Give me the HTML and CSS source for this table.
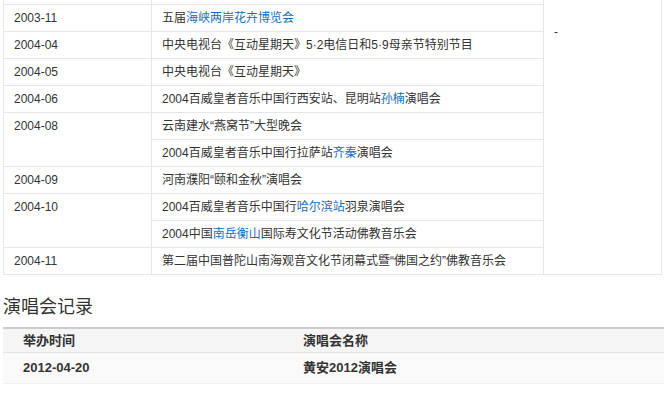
FILE: index.html
```html
<!DOCTYPE html>
<html lang="zh-CN">
<head>
<meta charset="utf-8">
<title>演出记录</title>
<link rel="stylesheet" href="styles.css">
</head>
<body>
<div class="page">
  <table class="events">
    <colgroup>
      <col class="c-date">
      <col class="c-name">
      <col class="c-note">
    </colgroup>
    <tr class="prev">
      <td></td>
      <td></td>
      <td class="note" rowspan="12">-</td>
    </tr>
    <tr><td>2003-11</td><td>五届<a href="#">海峡两岸花卉博览会</a></td></tr>
    <tr><td>2004-04</td><td>中央电视台《互动星期天》5·2电信日和5·9母亲节特别节目</td></tr>
    <tr><td>2004-05</td><td>中央电视台《互动星期天》</td></tr>
    <tr><td>2004-06</td><td>2004百威皇者音乐中国行西安站、昆明站<a href="#">孙楠</a>演唱会</td></tr>
    <tr><td rowspan="2" class="top">2004-08</td><td>云南建水“燕窝节”大型晚会</td></tr>
    <tr><td>2004百威皇者音乐中国行拉萨站<a href="#">齐秦</a>演唱会</td></tr>
    <tr><td>2004-09</td><td>河南濮阳“颐和金秋”演唱会</td></tr>
    <tr><td rowspan="2" class="top">2004-10</td><td>2004百威皇者音乐中国行<a href="#">哈尔滨站</a>羽泉演唱会</td></tr>
    <tr><td>2004中国<a href="#">南岳衡山</a>国际寿文化节活动佛教音乐会</td></tr>
    <tr><td>2004-11</td><td>第二届中国普陀山南海观音文化节闭幕式暨“佛国之约”佛教音乐会</td></tr>
  </table>

  <h2 class="title">演唱会记录</h2>

  <table class="concerts">
    <colgroup>
      <col class="k-date">
      <col class="k-name">
    </colgroup>
    <tr class="head"><th>举办时间</th><th>演唱会名称</th></tr>
    <tr class="row"><td>2012-04-20</td><td>黄安2012演唱会</td></tr>
  </table>
</div>
</body>
</html>
```
FILE: styles.css
```css
html, body {
  margin: 0;
  padding: 0;
  background: #fff;
}
body {
  font-family: "Liberation Sans", Arial, "Noto Sans CJK SC", sans-serif;
  color: #333;
  font-size: 12px;
}
.page {
  padding-left: 3px;
  overflow: hidden;
  height: 397px;
}
a {
  color: #136ec2;
  text-decoration: none;
}

.events {
  border-collapse: collapse;
  table-layout: fixed;
  width: 658px;
  margin-top: -23px;
}
.c-date { width: 148px; }
.c-name { width: 392px; }
.c-note { width: 118px; }
.events td {
  border: 1px solid #e6e6e6;
  padding: 0 10px;
  line-height: 26px;
  height: 26px;
  white-space: nowrap;
  vertical-align: middle;
}
.events td.top {
  vertical-align: top;
}
.events td.note {
  vertical-align: top;
  padding-top: 41px;
}

.title {
  margin: 19px 0 7px;
  font-size: 18px;
  line-height: 26px;
  font-weight: normal;
  color: #333;
}

.concerts {
  border-collapse: collapse;
  table-layout: fixed;
  width: 661px;
  border-top: 2px solid #ccc;
}
.k-date { width: 280px; }
.concerts th,
.concerts td {
  text-align: left;
  font-weight: bold;
  font-size: 13px;
  padding: 0 20px;
  white-space: nowrap;
}
.concerts .head th {
  background: #f5f5f5;
  height: 23px;
  line-height: 23px;
  border-bottom: 1px solid #e4e4e4;
}
.concerts .row td {
  background: #fafafa;
  height: 30px;
  line-height: 30px;
  border-bottom: 1px solid #f0f0f0;
}
```
